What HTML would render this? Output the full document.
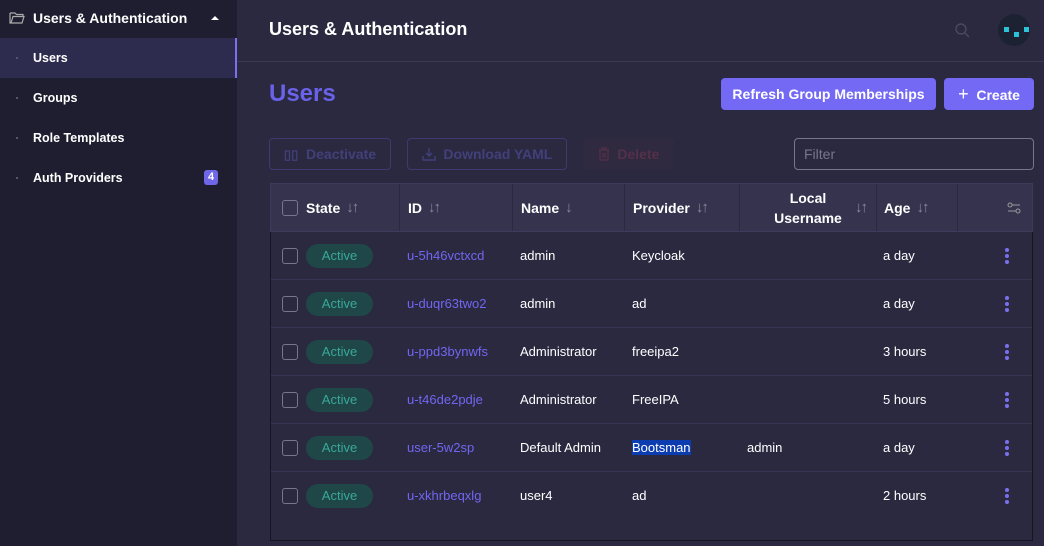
<!DOCTYPE html>
<html><head><meta charset="utf-8"><style>
*{box-sizing:border-box;margin:0;padding:0}
body{width:1044px;height:546px;overflow:hidden;background:#2a2940;font-family:"Liberation Sans",sans-serif;color:#fff;position:relative;font-size:13px}
.side{position:absolute;left:0;top:0;width:237px;height:546px;background:#1f1e30}
.side .hd{position:absolute;left:0;top:0;width:237px;height:38px;font-weight:bold;font-size:14px}
.nav{position:absolute;left:0;width:237px;height:40px;line-height:40px;padding-left:33px;font-weight:bold;font-size:12.5px}
.nav:before{content:"";position:absolute;left:16px;top:19px;width:2px;height:2px;background:#555468}
.sel{background:#2d2b4e;border-right:2px solid #7a70f0}
.main{position:absolute;left:237px;top:0;right:0;height:546px}
.top{position:absolute;left:0;top:0;right:0;height:62px;border-bottom:1px solid #3a3956}
.btn{position:absolute;height:32px;border-radius:4px;font-weight:bold;font-size:14px;line-height:32px;text-align:center}
.dis{border:1px solid #3c3a70;color:#42407a;font-size:14px;height:32px;line-height:30px}
.table{position:absolute;left:270px;top:183px;width:763px;height:358px;border:1px solid #151420;border-top:none;background:#2a2940}
.th{position:absolute;left:270px;top:183px;width:763px;height:49px;background:#35334e;border:1px solid #3d3b5c}
.th div{position:absolute;top:0;height:47px;border-right:1px solid #2a2940;font-weight:bold;font-size:14px;display:flex;align-items:center}
.row{position:absolute;left:271px;width:761px;height:48px;border-bottom:1px solid #363452}
.row span{position:absolute;top:16px;font-size:13px}
.cb{position:absolute;width:16px;height:16px;border:1px solid #77768a;border-radius:3px}
.pill{position:absolute;left:35px;top:12px;width:67px;height:24px;border-radius:12px;background:#1f4747;color:#3aa79a;text-align:center;line-height:24px;font-size:13px}
.id{color:#7266f0}
.dots{position:absolute;left:734px;top:16px;width:4px}
.dots i{display:block;width:4px;height:4px;border-radius:50%;background:#7a70f0;margin-bottom:2px}
.ar{color:#8a899c;font-weight:normal;margin-left:6px;font-size:15px;letter-spacing:-2px}
</style></head><body>
<div class="side">
 <div class="hd">
  <svg style="position:absolute;left:9px;top:11px" width="16" height="14" viewBox="0 0 16 14"><path d="M1 2h5l1.5 1.5H14v2M1 2v10h12l2-6.5H4L2 12" fill="none" stroke="#aaa" stroke-width="1.2"/></svg>
  <span style="position:absolute;left:33px;top:10px">Users &amp; Authentication</span>
  <span style="position:absolute;left:211px;top:16px;border-left:4px solid transparent;border-right:4px solid transparent;border-bottom:4px solid #fff;width:0;height:0"></span>
 </div>
 <div class="nav sel" style="top:38px">Users</div>
 <div class="nav" style="top:78px">Groups</div>
 <div class="nav" style="top:118px">Role Templates</div>
 <div class="nav" style="top:158px">Auth Providers<span style="position:absolute;left:204px;top:12px;width:14px;height:15px;background:#6f66e8;border-radius:3px;font-size:11px;line-height:15px;text-align:center">4</span></div>
</div>
<div class="main">
 <div class="top"><span style="position:absolute;left:32px;top:19px;font-size:18px;font-weight:bold">Users &amp; Authentication</span>
  <svg style="position:absolute;left:718px;top:23px" width="15" height="15" viewBox="0 0 15 15"><circle cx="6" cy="6" r="5" fill="none" stroke="#4a4960" stroke-width="1.4"/><path d="M10 10l4 4" stroke="#4a4960" stroke-width="1.4"/></svg>
  <div style="position:absolute;left:761px;top:14px;width:32px;height:32px;border-radius:50%;background:#1d2233"></div>
  <div style="position:absolute;left:767px;top:27px;width:5px;height:5px;background:#2bc4d6"></div>
  <div style="position:absolute;left:777px;top:32px;width:5px;height:5px;background:#2bc4d6"></div>
  <div style="position:absolute;left:787px;top:27px;width:5px;height:5px;background:#2bc4d6"></div>
 </div>
 <span style="position:absolute;left:32px;top:80px;font-size:24px;font-weight:bold;color:#6a62e8">Users</span>
</div>
<div class="btn" style="left:721px;top:78px;width:215px;background:#7369f5">Refresh Group Memberships</div>
<div class="btn" style="left:944px;top:78px;width:90px;background:#7369f5"><span style="font-weight:normal;font-size:18px">+</span>&nbsp; Create</div>
<div class="btn dis" style="left:269px;top:138px;width:122px"><span style="font-size:13px">▯▯</span>&nbsp; Deactivate</div>
<div class="btn dis" style="left:407px;top:138px;width:160px"><svg width="14" height="14" viewBox="0 0 14 14" style="vertical-align:-2px"><path d="M7 1v8M4 6l3 3 3-3M1 9v4h12V9" fill="none" stroke="#42407a" stroke-width="1.4"/></svg>&nbsp; Download YAML</div>
<div class="btn" style="left:583px;top:138px;width:91px;background:#2f2a3f;color:#54304a;font-size:14px;line-height:32px"><svg width="12" height="14" viewBox="0 0 12 14" style="vertical-align:-2px"><path d="M1 3h10M4 3V1h4v2M2 3v10h8V3M5 6v5M7 6v5" fill="none" stroke="#54304a" stroke-width="1.3"/></svg>&nbsp; Delete</div>
<div style="position:absolute;left:794px;top:138px;width:240px;height:32px;border:1px solid #77768a;border-radius:4px;color:#77768a;font-size:14px;line-height:30px;padding-left:9px">Filter</div>
<div class="table"></div>
<div class="th">
 <div style="left:0;width:129px;padding-left:35px">State<span class="ar">↓↑</span></div>
 <div style="left:129px;width:113px;padding-left:8px">ID<span class="ar">↓↑</span></div>
 <div style="left:242px;width:112px;padding-left:8px">Name<span class="ar">↓</span></div>
 <div style="left:354px;width:115px;padding-left:8px">Provider<span class="ar">↓↑</span></div>
 <div style="left:469px;width:137px;justify-content:center;text-align:center;line-height:20px">Local<br>Username<span class="ar" style="position:absolute;right:10px;top:14px">↓↑</span></div>
 <div style="left:606px;width:81px;padding-left:7px">Age<span class="ar">↓↑</span></div>
 <div style="left:736px;border:none"><svg width="14" height="12" viewBox="0 0 14 12"><circle cx="3" cy="3" r="2" fill="none" stroke="#999" /><path d="M5 3h8M1 9h8" stroke="#999"/><circle cx="11" cy="9" r="2" fill="none" stroke="#999"/></svg></div>
 <div class="cb" style="left:11px;top:16px;position:absolute;border-right:1px solid #77768a;height:16px"></div>
</div>
<div class="row" style="top:232px"><div class="cb" style="left:11px;top:16px"></div><div class="pill">Active</div><span class="id" style="left:136px">u-5h46vctxcd</span><span style="left:249px">admin</span><span style="left:361px">Keycloak</span><span style="left:612px">a day</span><div class="dots"><i></i><i></i><i></i></div></div>
<div class="row" style="top:280px"><div class="cb" style="left:11px;top:16px"></div><div class="pill">Active</div><span class="id" style="left:136px">u-duqr63two2</span><span style="left:249px">admin</span><span style="left:361px">ad</span><span style="left:612px">a day</span><div class="dots"><i></i><i></i><i></i></div></div>
<div class="row" style="top:328px"><div class="cb" style="left:11px;top:16px"></div><div class="pill">Active</div><span class="id" style="left:136px">u-ppd3bynwfs</span><span style="left:249px">Administrator</span><span style="left:361px">freeipa2</span><span style="left:612px">3 hours</span><div class="dots"><i></i><i></i><i></i></div></div>
<div class="row" style="top:376px"><div class="cb" style="left:11px;top:16px"></div><div class="pill">Active</div><span class="id" style="left:136px">u-t46de2pdje</span><span style="left:249px">Administrator</span><span style="left:361px">FreeIPA</span><span style="left:612px">5 hours</span><div class="dots"><i></i><i></i><i></i></div></div>
<div class="row" style="top:424px"><div class="cb" style="left:11px;top:16px"></div><div class="pill">Active</div><span class="id" style="left:136px">user-5w2sp</span><span style="left:249px">Default Admin</span><span style="left:361px;background:#0b3cb0">Bootsman</span><span style="left:476px">admin</span><span style="left:612px">a day</span><div class="dots"><i></i><i></i><i></i></div></div>
<div class="row" style="top:472px;border:none"><div class="cb" style="left:11px;top:16px"></div><div class="pill">Active</div><span class="id" style="left:136px">u-xkhrbeqxlg</span><span style="left:249px">user4</span><span style="left:361px">ad</span><span style="left:612px">2 hours</span><div class="dots"><i></i><i></i><i></i></div></div>
</body></html>
